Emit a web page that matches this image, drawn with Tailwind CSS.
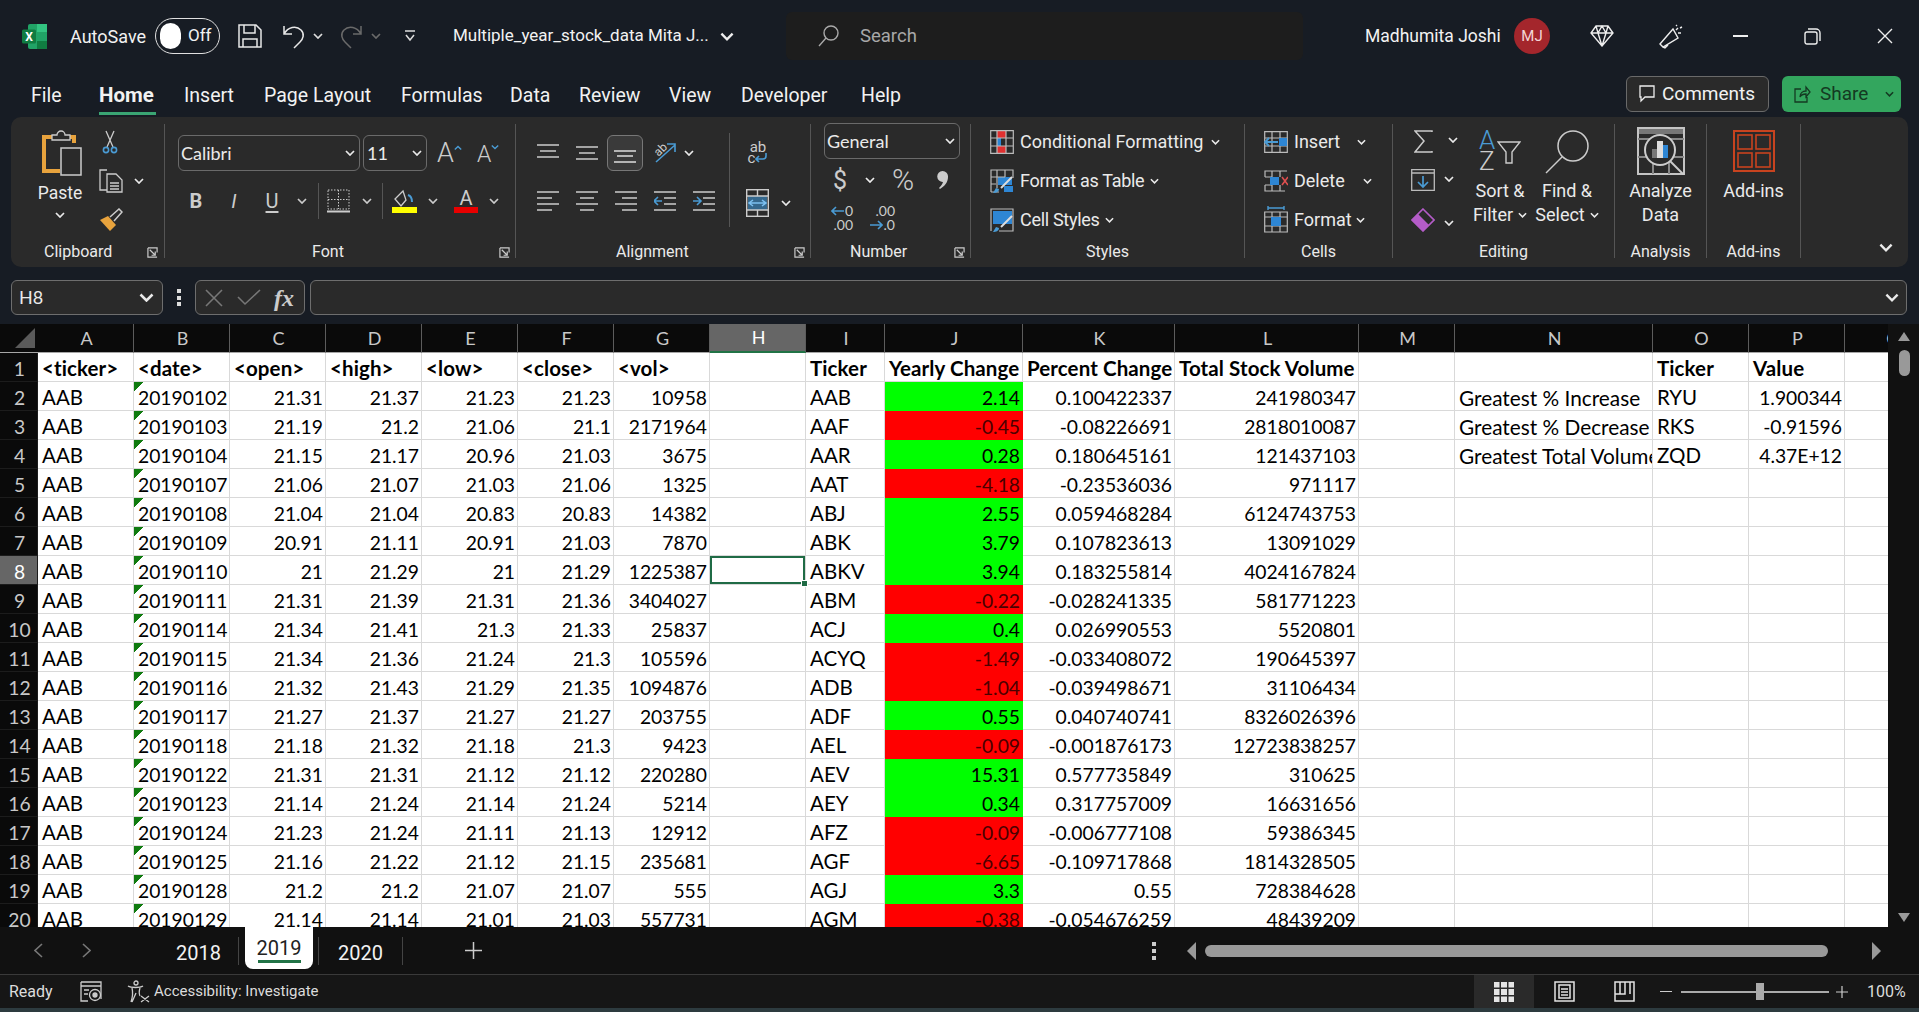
<!DOCTYPE html>
<html>
<head>
<meta charset="utf-8">
<script src="https://cdn.jsdelivr.net/npm/@tailwindcss/browser@4"></script>
</head>
<body class="w-[1919px] h-[1012px] overflow-hidden bg-[#171c24] text-[#f2f2f2] font-['Roboto',sans-serif] text-[18px] flex flex-col">
<svg class="hidden"><symbol id="c" viewBox="0 0 10 6"><path d="M1 1l4 4 4-4" fill="none" stroke="currentColor" stroke-width="1.7"/></symbol>
<symbol id="l" viewBox="0 0 12 12"><path d="M1 1v10h10M1 1h10v5M3 3l6 6M9 5v4H5" fill="none" stroke="currentColor" stroke-width="1.3"/></symbol></svg>

<!-- Title bar -->
<div class="h-[72px] flex items-center shrink-0">
  <svg class="ml-[22px] w-[25px] h-[25px]" viewBox="0 0 25 25"><rect x="6" y="0" width="19" height="25" rx="2" fill="#21a366"/><rect x="15" y="0" width="10" height="8" fill="#33c481"/><rect x="15" y="17" width="10" height="8" fill="#107c41"/><rect x="0" y="5.5" width="14" height="14" rx="1.5" fill="#107c41"/><text x="7" y="16.5" font-size="12" font-weight="700" fill="#fff" text-anchor="middle" font-family="Roboto">X</text></svg>
  <span class="ml-[23px] w-[78px] text-[18px]">AutoSave</span>
  <div class="ml-[7px] w-[65px] h-[36px] rounded-full border border-[#e0e0e0] flex items-center">
    <span class="ml-[4px] w-[21px] h-[26px] rounded-full bg-white"></span><span class="ml-[7px] text-[17px]">Off</span>
  </div>
  <svg class="ml-[18px] w-[24px] h-[24px] text-[#e8e8e8]" viewBox="0 0 24 24" fill="none" stroke="currentColor" stroke-width="1.5"><path d="M1 1h17l5 5v17H1z"/><path d="M6 1v8h11V1M5 23v-8h14v8"/></svg>
  <svg class="ml-[20px] w-[24px] h-[25px] text-[#e8e8e8]" viewBox="0 0 24 25" fill="none" stroke="currentColor" stroke-width="1.5"><path d="M2 2v8h8M2 10C6 3 14 1 19 6c4 4 2 9-1 12l-6 6"/></svg>
  <svg class="ml-[7px] w-[10px] h-[6px] text-[#ddd]"><use href="#c"/></svg>
  <svg class="ml-[16px] w-[24px] h-[25px] text-[#6a6a6a]" viewBox="0 0 24 25" fill="none" stroke="currentColor" stroke-width="1.5"><path d="M22 2v8h-8M22 10C18 3 10 1 5 6c-4 4-2 9 1 12l6 6"/></svg>
  <svg class="ml-[8px] w-[10px] h-[6px] text-[#6a6a6a]"><use href="#c"/></svg>
  <svg class="ml-[23px] w-[12px] h-[12px] text-[#ddd]" viewBox="0 0 12 12" fill="none" stroke="currentColor" stroke-width="1.5"><path d="M1 1h10M2 5l4 5 4-5"/></svg>
  <span class="ml-[37px] w-[258px] whitespace-nowrap text-[17px]">Multiple_year_stock_data Mita J...</span>
  <svg class="ml-[9px] w-[14px] h-[9px] text-[#eee]"><use href="#c"/></svg>
  <div class="ml-[52px] w-[517px] h-[48px] rounded-[6px] bg-[#1d1d1d] flex items-center">
    <svg class="ml-[32px] w-[21px] h-[22px] text-[#aaa]" viewBox="0 0 21 22" fill="none" stroke="currentColor" stroke-width="1.4"><circle cx="13" cy="8" r="7"/><path d="M8 13 1 21"/></svg>
    <span class="ml-[21px] pt-[2px] text-[#a8a8a8] text-[18.5px]">Search</span>
  </div>
  <span class="ml-[62px] w-[135px] whitespace-nowrap text-[17.5px]">Madhumita Joshi</span>
  <div class="ml-[14px] w-[36px] h-[36px] rounded-full bg-[#a4262c] flex items-center justify-center text-[15px] text-[#f3d6d6]">MJ</div>
  <svg class="ml-[40px] w-[24px] h-[22px] text-[#eee]" viewBox="0 0 24 22" fill="none" stroke="currentColor" stroke-width="1.4"><path d="M6 1h12l5 7-11 13L1 8zM1 8h22M8 8l4 13 4-13M6 1l2 7 4-7 4 7 2-7"/></svg>
  <svg class="ml-[45px] w-[24px] h-[25px] text-[#eee]" viewBox="0 0 24 25" fill="none" stroke="currentColor" stroke-width="1.4"><path d="M14 5 1 20l3 3 15-9zM4 23l2 1 3-3M17 6l2-2M19 9h3M17 2l1-1M21 4l2-1"/></svg>
  <div class="ml-[50px] w-[15px] h-[1.5px] bg-[#eee]"></div>
  <svg class="ml-[56px] w-[17px] h-[17px] text-[#eee]" viewBox="0 0 17 17" fill="none" stroke="currentColor" stroke-width="1.4"><rect x="1" y="4" width="12" height="12" rx="2"/><path d="M4 1h8a4 4 0 0 1 4 4v8"/></svg>
  <svg class="ml-[56px] w-[16px] h-[16px] text-[#eee]" viewBox="0 0 16 16" fill="none" stroke="currentColor" stroke-width="1.4"><path d="M1 1l14 14M15 1 1 15"/></svg>
</div>

<!-- Tabs -->
<div class="h-[45px] flex shrink-0 text-[19.5px] whitespace-nowrap">
  <div class="flex items-start pt-[9px]">
    <span class="ml-[31px] w-[68px]">File</span>
    <span class="w-[57px] h-[31px] text-[20.5px] font-bold border-b-[3px] border-[#3aa573] box-content leading-[29px]">Home</span>
    <span class="ml-[28px] w-[52px]">Insert</span>
    <span class="ml-[28px] w-[109px]">Page Layout</span>
    <span class="ml-[28px] w-[81px]">Formulas</span>
    <span class="ml-[28px] w-[41px]">Data</span>
    <span class="ml-[28px] w-[62px]">Review</span>
    <span class="ml-[28px] w-[42px]">View</span>
    <span class="ml-[30px] w-[90px]">Developer</span>
    <span class="ml-[30px] w-[40px]">Help</span>
  </div>
  <div class="ml-[725px] mt-[4px] w-[143px] h-[36px] rounded-[6px] border border-[#6a6a6a] bg-[#2a2a2a] flex items-center text-[19px]">
    <svg class="ml-[12px] w-[16px] h-[18px] text-[#eee]" viewBox="0 0 16 18" fill="none" stroke="currentColor" stroke-width="1.3"><path d="M1 1h14v11H6l-4 4v-4H1z"/></svg>
    <span class="ml-[7px]">Comments</span>
  </div>
  <div class="ml-[13px] mt-[4px] w-[119px] h-[36px] rounded-[6px] bg-[#33a65e] flex items-center text-[19px] text-[#143a22]">
    <svg class="ml-[12px] w-[17px] h-[18px] text-[#143a22]" viewBox="0 0 17 18" fill="none" stroke="currentColor" stroke-width="1.3"><path d="M7 4H1v13h12v-5M6 12c0-4 3-6 6-6V2l4 5-4 5V9c-3 0-5 1-6 3z"/></svg>
    <span class="ml-[9px]">Share</span>
    <svg class="ml-[17px] w-[9px] h-[6px]"><use href="#c"/></svg>
  </div>
</div>

<!-- Ribbon -->
<div class="ml-[11px] w-[1897px] h-[150px] rounded-[10px] bg-[#2a2a2a] flex shrink-0 text-[#eaeaea]">

  <!-- Clipboard -->
  <div class="w-[154px] h-[134px] mt-[7px] border-r border-[#555] flex flex-col">
    <div class="flex h-[118px] shrink-0">
      <div class="ml-[10px] w-[78px] flex flex-col items-center">
        <svg class="mt-[6px] ml-[4px] w-[42px] h-[46px]" viewBox="0 0 42 46" fill="none"><path d="M3 43V7h30v6" stroke="#e8a33d" stroke-width="4"/><path d="M3 41h16" stroke="#e8a33d" stroke-width="4"/><path d="M11 9V5h5a4 4 0 0 1 8 0h5v5H11z" stroke="#ccc" stroke-width="1.3" fill="#2a2a2a"/><rect x="20" y="18" width="20" height="27" stroke="#ccc" stroke-width="1.5" fill="#2a2a2a"/></svg>
        <span class="mt-[5px] leading-[24px] text-[17.5px]">Paste</span>
        <svg class="mt-[7px] w-[10px] h-[6px]"><use href="#c"/></svg>
      </div>
      <div class="pt-[6px] flex flex-col gap-[15px]">
        <svg class="ml-[3px] w-[16px] h-[24px]" viewBox="0 0 16 24" fill="none"><path d="M4 1l7 16M12 1 5 17" stroke="#ccc" stroke-width="1.3"/><circle cx="4" cy="20" r="2.6" stroke="#4a9bd4" stroke-width="1.6"/><circle cx="12" cy="20" r="2.6" stroke="#4a9bd4" stroke-width="1.6"/></svg>
        <div class="flex items-center">
          <svg class="w-[24px] h-[24px]" viewBox="0 0 24 24" fill="none" stroke="#ccc" stroke-width="1.3"><path d="M8 1H1v20h7"/><path d="M8 5h9l6 6v12H8zM11 14h9M11 17h9M11 20h9"/></svg>
          <svg class="ml-[11px] w-[10px] h-[6px]"><use href="#c"/></svg>
        </div>
        <svg class="w-[24px] h-[24px]" viewBox="0 0 24 24"><path d="M1 12l8-4 8 9-6 6z" fill="#e8a33d"/><path d="M11 9l9-8 3 3-8 9" fill="none" stroke="#ccc" stroke-width="1.5"/></svg>
      </div>
    </div>
    <div class="h-[20px] flex items-center text-[16px] whitespace-nowrap"><span class="ml-[33px]">Clipboard</span><svg class="ml-auto mr-[6px] w-[11px] h-[11px] text-[#ccc]"><use href="#l"/></svg></div>
  </div>

  <!-- Font -->
  <div class="w-[351px] h-[134px] mt-[7px] border-r border-[#555] flex flex-col">
    <div class="h-[118px] shrink-0">
      <div class="mt-[11px] ml-[13px] h-[36px] flex items-center">
        <div class="w-[182px] h-[36px] rounded-[6px] border border-[#6a6a6a] flex items-center pl-[2px]"><span class="font-[Lato]">Calibri</span><svg class="ml-auto mr-[4px] w-[10px] h-[6px]"><use href="#c"/></svg></div>
        <div class="ml-[3px] w-[64px] h-[36px] rounded-[6px] border border-[#6a6a6a] flex items-center pl-[3px]"><span class="font-[Lato]">11</span><svg class="ml-auto mr-[4px] w-[10px] h-[6px]"><use href="#c"/></svg></div>
        <span class="ml-[10px] text-[27px] leading-none font-light text-[#ccc]">A</span><svg class="mb-[10px] w-[8px] h-[6px] text-[#4a9bd4] rotate-180"><use href="#c"/></svg>
        <span class="ml-[15px] text-[23px] leading-none font-light text-[#ccc] pt-[3px]">A</span><svg class="mb-[12px] w-[8px] h-[6px] text-[#4a9bd4]"><use href="#c"/></svg>
      </div>
      <div class="mt-[12px] ml-[13px] h-[36px] flex items-center text-[#ccc]">
        <span class="w-[36px] text-center font-bold text-[20px] leading-none">B</span>
        <span class="w-[40px] text-center italic text-[20px] leading-none">I</span>
        <span class="w-[36px] text-center text-[20px] leading-none underline underline-offset-[3px]">U</span>
        <div class="w-[24px] flex justify-center"><svg class="w-[10px] h-[6px]"><use href="#c"/></svg></div>
        <div class="ml-[4px] w-px h-[36px] bg-[#555]"></div>
        <svg class="ml-[8px] w-[23px] h-[24px]" viewBox="0 0 23 24" fill="none" stroke="#ccc"><path d="M1 1h21v19H1z" stroke-dasharray="1.5 1.5"/><path d="M11.5 1v19M1 10.5h21" stroke-dasharray="1.5 1.5"/><path d="M0 22.5h23" stroke-width="2"/></svg>
        <div class="ml-[8px] w-[18px] flex justify-center"><svg class="w-[10px] h-[6px]"><use href="#c"/></svg></div>
        <div class="ml-[6px] w-px h-[36px] bg-[#555]"></div>
        <svg class="ml-[9px] w-[25px] h-[24px]" viewBox="0 0 25 24" fill="none"><path d="M3 10l8-8 3 9-5 6z" stroke="#ccc" stroke-width="1.3"/><path d="M16 6c3 1 4 4 4 7" stroke="#4a9bd4" stroke-width="2"/><rect x="0" y="18" width="25" height="6" fill="#ffff00"/></svg>
        <div class="ml-[7px] w-[18px] flex justify-center"><svg class="w-[10px] h-[6px]"><use href="#c"/></svg></div>
        <div class="ml-[12px] w-[24px] h-[24px] flex flex-col items-center"><span class="text-[20px] leading-[18px]">A</span><span class="w-[24px] h-[6px] bg-[#e80000]"></span></div>
        <div class="ml-[7px] w-[18px] flex justify-center"><svg class="w-[10px] h-[6px]"><use href="#c"/></svg></div>
      </div>
    </div>
    <div class="h-[20px] flex items-center text-[16px]"><span class="ml-[147px]">Font</span><svg class="ml-auto mr-[5px] w-[11px] h-[11px] text-[#ccc]"><use href="#l"/></svg></div>
  </div>

  <!-- Alignment -->
  <div class="w-[295px] h-[134px] mt-[7px] border-r border-[#555] flex flex-col">
    <div class="h-[118px] shrink-0 flex">
      <div class="w-[214px] h-[94px] mt-[9px] border-r border-[#555]">
        <div class="mt-[2px] ml-[12px] h-[36px] flex items-center">
          <div class="w-[39px] flex justify-center"><svg class="w-[22px] h-[22px]" viewBox="0 0 22 22" stroke="#ccc" stroke-width="1.6"><path d="M0 3h22M3 9h16M0 15h22"/></svg></div>
          <div class="w-[39px] flex justify-center"><svg class="w-[22px] h-[22px]" viewBox="0 0 22 22" stroke="#ccc" stroke-width="1.6"><path d="M0 5h22M3 11h16M0 17h22"/></svg></div>
          <div class="w-[39px] flex justify-end"><div class="w-[36px] h-[36px] rounded-[6px] border border-[#777] bg-[#3a3a3a] flex justify-center items-center mr-[2px]"><svg class="w-[22px] h-[22px]" viewBox="0 0 22 22" stroke="#ddd" stroke-width="1.6"><path d="M0 9h22M3 14h16M0 20h22"/></svg></div></div>
          <div class="w-[39px] flex justify-center"><svg class="w-[26px] h-[26px]" viewBox="0 0 26 26" fill="none"><path d="M4 22 23 5M15 4h8v8" stroke="#4a9bd4" stroke-width="1.6"/><text x="2" y="14" font-size="12" fill="#ccc" font-family="Roboto" transform="rotate(-45 8 10)">ab</text></svg></div>
          <svg class="w-[10px] h-[6px]"><use href="#c"/></svg>
        </div>
        <div class="mt-[12px] ml-[12px] h-[36px] flex items-center">
          <div class="w-[39px] flex justify-center"><svg class="w-[22px] h-[22px]" viewBox="0 0 22 22" stroke="#ccc" stroke-width="1.6"><path d="M0 2h22M0 8h15M0 14h22M0 20h15"/></svg></div>
          <div class="w-[39px] flex justify-center"><svg class="w-[22px] h-[22px]" viewBox="0 0 22 22" stroke="#ccc" stroke-width="1.6"><path d="M0 2h22M4 8h14M0 14h22M4 20h14"/></svg></div>
          <div class="w-[39px] flex justify-center"><svg class="w-[22px] h-[22px]" viewBox="0 0 22 22" stroke="#ccc" stroke-width="1.6"><path d="M0 2h22M7 8h15M0 14h22M7 20h15"/></svg></div>
          <div class="w-[39px] flex justify-center"><svg class="w-[22px] h-[22px]" viewBox="0 0 22 22" fill="none" stroke-width="1.6"><path d="M0 2h22M10 8h12M10 14h12M0 20h22" stroke="#ccc"/><path d="M8 11H0M4 7l-4 4 4 4" stroke="#4a9bd4"/></svg></div>
          <div class="w-[39px] flex justify-center"><svg class="w-[22px] h-[22px]" viewBox="0 0 22 22" fill="none" stroke-width="1.6"><path d="M0 2h22M10 8h12M10 14h12M0 20h22" stroke="#ccc"/><path d="M0 11h8M4 7l4 4-4 4" stroke="#4a9bd4"/></svg></div>
        </div>
      </div>
      <div class="ml-[16px] flex flex-col">
        <div class="mt-[18px] w-[24px] h-[24px] flex flex-col items-center text-[15px] leading-[11px] text-[#ccc]"><span>ab</span><span class="flex items-center">c<svg class="w-[13px] h-[11px]" viewBox="0 0 13 11" fill="none" stroke="#4a9bd4" stroke-width="1.6"><path d="M11 0v3a3 3 0 0 1-3 3H1M4 3 1 6l3 3"/></svg></span></div>
        <div class="mt-[23px] flex items-center">
          <svg class="w-[23px] h-[28px]" viewBox="0 0 23 28" fill="none"><rect x="2" y="7" width="19" height="14" fill="#35688d"/><rect x=".7" y=".7" width="21.6" height="26.6" stroke="#ccc" stroke-width="1.4"/><path d="M.7 7h21.6M.7 21h21.6M11.5 1v6M11.5 21v6" stroke="#ccc" stroke-width="1.4"/><path d="M3 14h17M7 11l-4 3 4 3M16 11l4 3-4 3" stroke="#7cc0f0" stroke-width="1.5"/></svg>
          <svg class="ml-[12px] w-[10px] h-[6px]"><use href="#c"/></svg>
        </div>
      </div>
    </div>
    <div class="h-[20px] flex items-center text-[16px]"><span class="ml-[100px]">Alignment</span><svg class="ml-auto mr-[5px] w-[11px] h-[11px] text-[#ccc]"><use href="#l"/></svg></div>
  </div>

  <!-- Number -->
  <div class="w-[160px] h-[134px] mt-[7px] border-r border-[#555] flex flex-col">
    <div class="h-[118px] shrink-0">
      <div class="-mt-[1px] ml-[13px] w-[136px] h-[36px] rounded-[6px] border border-[#6a6a6a] flex items-center pl-[2px]"><span class="font-[Lato]">General</span><svg class="ml-auto mr-[4px] w-[10px] h-[6px]"><use href="#c"/></svg></div>
      <div class="mt-[6px] ml-[22px] h-[30px] flex items-center text-[#ccc]">
        <span class="w-[16px] text-[25px] leading-none">$</span>
        <svg class="ml-[16px] w-[10px] h-[6px] text-[#eee]"><use href="#c"/></svg>
        <span class="ml-[17px] text-[30px] leading-none font-light">%</span>
        <svg class="ml-[23px] w-[11px] h-[18px]" viewBox="0 0 11 18"><path d="M5.500 0A5.500 5.500 0 0 1 11 6c0 5-3 9-8 12l-1-1c2-2 3.500-4 4-6A5.500 5.500 0 0 1 5.500 0z" fill="#ccc"/></svg>
      </div>
      <div class="mt-[9px] ml-[16px] flex items-center text-[14px] leading-[14px] text-[#ccc] font-[Lato]">
        <div class="w-[26px] flex flex-col items-end"><span class="flex items-center"><svg class="w-[13px] h-[10px] mr-[1px]" viewBox="0 0 13 10" fill="none" stroke="#4a9bd4" stroke-width="1.6"><path d="M13 5H1M5 1 1 5l4 4"/></svg>0</span><span>.00</span></div>
        <div class="ml-[16px] w-[26px] flex flex-col items-end"><span>.00</span><span class="flex items-center"><svg class="w-[13px] h-[10px] mr-[1px]" viewBox="0 0 13 10" fill="none" stroke="#4a9bd4" stroke-width="1.6"><path d="M0 5h12M8 1l4 4-4 4"/></svg>.0</span></div>
      </div>
    </div>
    <div class="h-[20px] flex items-center text-[16px]"><span class="ml-[39px]">Number</span><svg class="ml-auto mr-[5px] w-[11px] h-[11px] text-[#ccc]"><use href="#l"/></svg></div>
  </div>

  <!-- Styles -->
  <div class="w-[274px] h-[134px] mt-[7px] border-r border-[#555] flex flex-col">
    <div class="h-[118px] shrink-0 pl-[19px] whitespace-nowrap">
      <div class="-mt-[2px] h-[39px] flex items-center">
        <svg class="w-[24px] h-[24px]" viewBox="0 0 24 24" fill="none"><rect x="7" y="1" width="9" height="7" fill="#e03030"/><rect x="7" y="8" width="4" height="8" fill="#2e86d4"/><rect x="7" y="16" width="9" height="7" fill="#e03030"/><path d="M.7.7h22.6v22.6H.7zM7 1v22M16 1v22M1 8h22M1 16h22" stroke="#bbb" stroke-width="1.2"/></svg>
        <span class="ml-[6px]">Conditional Formatting</span><svg class="ml-[8px] w-[9px] h-[6px]"><use href="#c"/></svg>
      </div>
      <div class="h-[39px] flex items-center">
        <svg class="w-[24px] h-[24px]" viewBox="0 0 24 24" fill="none"><rect x="8" y="8" width="14" height="8" fill="#2e86d4"/><rect x="14" y="17" width="9" height="6" fill="#2e86d4"/><path d="M1 23V1h22v8M7 1v18M15 1v7M1 8h14M1 15h5M1 23h8" stroke="#bbb" stroke-width="1.2"/><path d="M22 8 11 19" stroke="#ddd" stroke-width="2"/><path d="M3 24c3 0 6-1 6-4l-3-1c-1 2-2 3-3 5z" fill="#4a9bd4"/></svg>
        <span class="ml-[6px] tracking-[-0.3px]">Format as Table</span><svg class="ml-[6px] w-[9px] h-[6px]"><use href="#c"/></svg>
      </div>
      <div class="h-[39px] flex items-center">
        <svg class="w-[24px] h-[24px]" viewBox="0 0 24 24" fill="none"><rect x="3" y="3" width="19" height="13" fill="#2e86d4"/><path d="M1 23V1h22v22H9" stroke="#bbb" stroke-width="1.2"/><path d="M22 8 11 19" stroke="#ddd" stroke-width="2"/><path d="M3 24c3 0 6-1 6-4l-3-1c-1 2-2 3-3 5z" fill="#4a9bd4"/></svg>
        <span class="ml-[6px] tracking-[-0.3px]">Cell Styles</span><svg class="ml-[6px] w-[9px] h-[6px]"><use href="#c"/></svg>
      </div>
    </div>
    <div class="h-[20px] flex items-center justify-center text-[16px]">Styles</div>
  </div>

  <!-- Cells -->
  <div class="w-[148px] h-[134px] mt-[7px] border-r border-[#555] flex flex-col">
    <div class="h-[118px] shrink-0 pl-[19px] whitespace-nowrap">
      <div class="-mt-[2px] h-[39px] flex items-center">
        <svg class="w-[24px] h-[22px]" viewBox="0 0 24 22" fill="none"><path d="M.7.7h22.6v20.6H.7zM8 1v20M16 1v20M1 7h22M1 15h22" stroke="#bbb" stroke-width="1.2"/><rect x="15" y="7" width="8" height="8" fill="#2e86d4"/><path d="M14 11H1M5 7l-4 4 4 4" stroke="#4a9bd4" stroke-width="1.8"/></svg>
        <span class="ml-[6px]">Insert</span><svg class="ml-[17px] w-[9px] h-[6px]"><use href="#c"/></svg>
      </div>
      <div class="h-[39px] flex items-center">
        <svg class="w-[24px] h-[22px]" viewBox="0 0 24 22" fill="none"><path d="M1 7V1h22M1 15v6h20M1 7h7M1 15h7M8 1v6M16 1v6M8 15v6M16 15v6" stroke="#bbb" stroke-width="1.2"/><rect x="6" y="7" width="9" height="8" fill="#2e86d4"/><path d="M18 7l6 8M24 7l-6 8" stroke="#e05050" stroke-width="1.6"/></svg>
        <span class="ml-[6px]">Delete</span><svg class="ml-[18px] w-[9px] h-[6px]"><use href="#c"/></svg>
      </div>
      <div class="h-[39px] flex items-center">
        <svg class="w-[24px] h-[27px]" viewBox="0 0 24 27" fill="none"><path d="M.7 6h22.6v20H.7zM8 6v20M16 6v20M1 11h22M1 20h22" stroke="#bbb" stroke-width="1.2"/><rect x="7" y="11" width="10" height="9" fill="#2e86d4"/><path d="M4 2h16M4 0v4M20 0v4" stroke="#4a9bd4" stroke-width="1.4"/></svg>
        <span class="ml-[6px]">Format</span><svg class="ml-[4px] w-[9px] h-[6px]"><use href="#c"/></svg>
      </div>
    </div>
    <div class="h-[20px] flex items-center justify-center text-[16px]">Cells</div>
  </div>

  <!-- Editing -->
  <div class="w-[222px] h-[134px] mt-[7px] border-r border-[#555] flex flex-col">
    <div class="h-[118px] shrink-0 flex whitespace-nowrap">
      <div class="ml-[18px] w-[62px] -mr-[7px] pt-[6px] flex flex-col">
        <div class="h-[39px] flex items-start">
          <svg class="ml-[3px] w-[19px] h-[23px]" viewBox="0 0 19 23" fill="none" stroke="#ccc" stroke-width="1.5"><path d="M18 2V1H1l9 10-9 11h17v-1"/></svg>
          <svg class="ml-[15px] mt-[7px] w-[10px] h-[6px]"><use href="#c"/></svg>
        </div>
        <div class="h-[39px] flex items-start">
          <svg class="w-[24px] h-[22px]" viewBox="0 0 24 22" fill="none"><path d="M.7.7h22.6v20.6H.7zM1 4h22" stroke="#bbb" stroke-width="1.3"/><path d="M12 7v10M7 13l5 5 5-5" stroke="#4a9bd4" stroke-width="1.7"/></svg>
          <svg class="ml-[9px] mt-[7px] w-[10px] h-[6px]"><use href="#c"/></svg>
        </div>
        <div class="h-[30px] flex items-start">
          <svg class="w-[24px] h-[24px]" viewBox="0 0 24 24" fill="none"><path d="M12 1l11 11-11 11L1 12z" stroke="#b45cc8" stroke-width="1.6"/><path d="M1 12l6-6 11 11-6 6z" fill="#b45cc8"/></svg>
          <svg class="ml-[9px] mt-[12px] w-[10px] h-[6px]"><use href="#c"/></svg>
        </div>
      </div>
      <div class="w-[68px] flex flex-col items-center">
        <div class="mt-[6px] w-[42px] h-[42px] flex">
          <div class="w-[18px] flex flex-col text-[26px] leading-[21px] font-light"><span class="text-[#4a9bd4]">A</span><span class="text-[#ccc]">Z</span></div>
          <svg class="mt-[11px] w-[24px] h-[23px]" viewBox="0 0 24 23" fill="none" stroke="#ccc" stroke-width="1.4"><path d="M1 1h22L15 11v11H9V11z"/></svg>
        </div>
        <span class="mt-[7px] leading-[24px]">Sort &amp;</span>
        <span class="leading-[24px] flex items-center">Filter<svg class="ml-[5px] w-[9px] h-[6px]"><use href="#c"/></svg></span>
      </div>
      <div class="w-[66px] flex flex-col items-center">
        <svg class="mt-[6px] w-[44px] h-[44px]" viewBox="0 0 44 44" fill="none" stroke="#ccc" stroke-width="1.5"><circle cx="28" cy="16" r="15"/><path d="M17 27 1 43"/></svg>
        <span class="mt-[5px] leading-[24px]">Find &amp;</span>
        <span class="leading-[24px] flex items-center">Select<svg class="ml-[5px] w-[9px] h-[6px]"><use href="#c"/></svg></span>
      </div>
    </div>
    <div class="h-[20px] flex items-center justify-center text-[16px]">Editing</div>
  </div>

  <!-- Analysis -->
  <div class="w-[92px] h-[134px] mt-[7px] border-r border-[#555] flex flex-col">
    <div class="h-[118px] shrink-0 flex flex-col items-center">
      <svg class="mt-[3px] w-[48px] h-[48px]" viewBox="0 0 48 48" fill="none"><path d="M1 1h46v46H1z" stroke="#c4c4c4" stroke-width="2"/><rect x="2" y="2" width="44" height="5" fill="#777"/><path d="M1 12h46M1 30h46M16 30v17M32 30v17" stroke="#888" stroke-width="2"/><circle cx="23" cy="23" r="15" fill="#2a2a2a" stroke="#ccc" stroke-width="2"/><rect x="15" y="22" width="5" height="9" fill="#777"/><rect x="20" y="14" width="6" height="17" fill="#ddd"/><rect x="26" y="18" width="5" height="13" fill="#2e86d4"/><path d="M33 34l14 14" stroke="#ccc" stroke-width="2"/></svg>
      <span class="mt-[4px] leading-[24px]">Analyze</span>
      <span class="leading-[24px]">Data</span>
    </div>
    <div class="h-[20px] flex items-center justify-center text-[16px]">Analysis</div>
  </div>

  <!-- Add-ins -->
  <div class="w-[94px] h-[134px] mt-[7px] border-r border-[#555] flex flex-col">
    <div class="h-[118px] shrink-0 flex flex-col items-center">
      <svg class="mt-[6px] w-[42px] h-[42px]" viewBox="0 0 42 42" fill="none" stroke="#c8431f" stroke-width="1.6"><rect x="1" y="1" width="40" height="40" stroke-width="2"/><rect x="5" y="5" width="14" height="14"/><rect x="23" y="5" width="14" height="14"/><rect x="5" y="23" width="14" height="14"/><rect x="23" y="23" width="14" height="14"/></svg>
      <span class="mt-[7px] leading-[24px]">Add-ins</span>
    </div>
    <div class="h-[20px] flex items-center justify-center text-[16px]">Add-ins</div>
  </div>

  <div class="ml-[78px] mt-[126px]"><svg class="w-[14px] h-[9px]"><use href="#c"/></svg></div>
</div>

<!-- Formula bar -->
<div class="h-[57px] pt-[13px] flex shrink-0 text-[#eaeaea]">
  <div class="ml-[11px] w-[152px] h-[35px] rounded-[6px] border border-[#6e6e6e] bg-[#2a2a2a] flex items-center pl-[7px]"><span class="font-[Lato] text-[18px]">H8</span><svg class="ml-auto mr-[8px] w-[15px] h-[9px]"><use href="#c"/></svg></div>
  <div class="ml-[14px] mt-[9px] w-[5px] h-[17px] flex flex-col justify-between"><span class="w-[4px] h-[4px] bg-[#ddd]"></span><span class="w-[4px] h-[4px] bg-[#ddd]"></span><span class="w-[4px] h-[4px] bg-[#ddd]"></span></div>
  <div class="ml-[13px] w-[110px] h-[35px] rounded-[6px] border border-[#6e6e6e] bg-[#2a2a2a] flex items-center">
    <svg class="ml-[9px] w-[18px] h-[18px] text-[#777]" viewBox="0 0 18 18" fill="none" stroke="currentColor" stroke-width="1.6"><path d="M1 1l16 16M17 1 1 17"/></svg>
    <svg class="ml-[14px] w-[24px] h-[17px] text-[#777]" viewBox="0 0 24 17" fill="none" stroke="currentColor" stroke-width="1.6"><path d="M1 8l7 7L23 1"/></svg>
    <span class="ml-[13px] font-['Liberation_Serif',serif] italic font-bold text-[24px] leading-none text-[#ccc]">fx</span>
  </div>
  <div class="ml-[5px] w-[1597px] h-[35px] rounded-[6px] border border-[#6e6e6e] bg-[#2a2a2a] flex items-center"><svg class="ml-auto mr-[7px] w-[14px] h-[9px]"><use href="#c"/></svg></div>
</div>

<!-- Grid -->
<div class="h-[603px] flex shrink-0 bg-[#0a0a0a]">
  <div class="w-[1888px] overflow-hidden">
    <table class="table-fixed border-separate border-spacing-0 w-[1941px] font-[Lato] text-[19.3px] text-black bg-white [&_th]:h-[28px] [&_th]:font-normal [&_th]:bg-[#0a0a0a] [&_th]:text-[#c8c8c8] [&_th]:text-[18px] [&_th]:pl-[2px] [&_th]:border-r [&_th]:border-b [&_th]:border-r-[#5c5c5c] [&_th]:border-b-[#a6a6a6] [&_tbody_td]:h-[29px] [&_tbody_td]:border-r [&_tbody_td]:border-b [&_tbody_td]:border-[#d9d9d9] [&_tbody_td]:pl-[4px] [&_tbody_td]:pr-[2px] [&_tbody_td]:pt-[2px] [&_tbody_td]:pb-0 [&_tbody_td]:leading-[25px] [&_tbody_td]:text-right [&_tbody_td]:whitespace-nowrap [&_tbody_td]:overflow-hidden [&_tbody_td:nth-child(1)]:bg-[#0a0a0a] [&_tbody_td:nth-child(1)]:text-[#c8c8c8] [&_tbody_td:nth-child(1)]:text-center [&_tbody_td:nth-child(1)]:font-normal [&_tbody_td:nth-child(1)]:border-[#1c1c1c] [&_tbody_td:nth-child(2)]:text-left [&_tbody_td:nth-child(2)]:text-[20.5px] [&_tbody_td:nth-child(3)]:text-left [&_tbody_td:nth-child(10)]:text-left [&_tbody_td:nth-child(10)]:text-[20.5px] [&_tbody_td:nth-child(15)]:text-left [&_tbody_td:nth-child(15)]:text-[20.8px] [&_tbody_td:nth-child(16)]:text-left [&_tbody_td:nth-child(16)]:text-[20.5px] [&_tbody_tr+tr_td:nth-child(3)]:bg-[linear-gradient(135deg,#0f7b0f_6.5px,transparent_6.5px)]">
      <colgroup><col class="w-[38px]"><col class="w-[96px]"><col class="w-[96px]"><col class="w-[96px]"><col class="w-[96px]"><col class="w-[96px]"><col class="w-[96px]"><col class="w-[96px]"><col class="w-[96px]"><col class="w-[79px]"><col class="w-[138px]"><col class="w-[152px]"><col class="w-[184px]"><col class="w-[96px]"><col class="w-[198px]"><col class="w-[96px]"><col class="w-[96px]"><col class="w-[96px]"></colgroup>
      <thead><tr>
        <th class="border-r-0! pl-0!"><svg class="ml-[15px] w-[20px] h-[20px]" viewBox="0 0 20 20"><path d="M20 0v20H0z" fill="#5a5a5a"/></svg></th>
        <th>A</th><th>B</th><th>C</th><th>D</th><th>E</th><th>F</th><th>G</th><th class="bg-[#666]! text-white! border-b-2! border-b-[#217346]!">H</th><th>I</th><th>J</th><th>K</th><th>L</th><th>M</th><th>N</th><th>O</th><th>P</th><th>Q</th>
      </tr></thead>
      <tbody>
        <tr class="font-bold tracking-[0.1px] [&_td:nth-child(n)]:text-left [&_td:nth-child(n+2)]:text-[20.5px]"><td>1</td><td>&lt;ticker&gt;</td><td>&lt;date&gt;</td><td>&lt;open&gt;</td><td>&lt;high&gt;</td><td>&lt;low&gt;</td><td>&lt;close&gt;</td><td>&lt;vol&gt;</td><td></td><td>Ticker</td><td>Yearly Change</td><td>Percent Change</td><td>Total Stock Volume</td><td></td><td></td><td>Ticker</td><td>Value</td><td></td></tr>
        <tr><td>2</td><td>AAB</td><td>20190102</td><td>21.31</td><td>21.37</td><td>21.23</td><td>21.23</td><td>10958</td><td></td><td>AAB</td><td class="bg-[#00ff00] border-transparent!">2.14</td><td>0.100422337</td><td>241980347</td><td></td><td>Greatest % Increase</td><td>RYU</td><td>1.900344</td><td></td></tr>
        <tr><td>3</td><td>AAB</td><td>20190103</td><td>21.19</td><td>21.2</td><td>21.06</td><td>21.1</td><td>2171964</td><td></td><td>AAF</td><td class="bg-[#ff0000] text-[#4a0000] border-transparent!">-0.45</td><td>-0.08226691</td><td>2818010087</td><td></td><td>Greatest % Decrease</td><td>RKS</td><td>-0.91596</td><td></td></tr>
        <tr><td>4</td><td>AAB</td><td>20190104</td><td>21.15</td><td>21.17</td><td>20.96</td><td>21.03</td><td>3675</td><td></td><td>AAR</td><td class="bg-[#00ff00] border-transparent!">0.28</td><td>0.180645161</td><td>121437103</td><td></td><td>Greatest Total Volume</td><td>ZQD</td><td>4.37E+12</td><td></td></tr>
        <tr><td>5</td><td>AAB</td><td>20190107</td><td>21.06</td><td>21.07</td><td>21.03</td><td>21.06</td><td>1325</td><td></td><td>AAT</td><td class="bg-[#ff0000] text-[#4a0000] border-transparent!">-4.18</td><td>-0.23536036</td><td>971117</td><td></td><td></td><td></td><td></td><td></td></tr>
        <tr><td>6</td><td>AAB</td><td>20190108</td><td>21.04</td><td>21.04</td><td>20.83</td><td>20.83</td><td>14382</td><td></td><td>ABJ</td><td class="bg-[#00ff00] border-transparent!">2.55</td><td>0.059468284</td><td>6124743753</td><td></td><td></td><td></td><td></td><td></td></tr>
        <tr><td>7</td><td>AAB</td><td>20190109</td><td>20.91</td><td>21.11</td><td>20.91</td><td>21.03</td><td>7870</td><td></td><td>ABK</td><td class="bg-[#00ff00] border-transparent!">3.79</td><td>0.107823613</td><td>13091029</td><td></td><td></td><td></td><td></td><td></td></tr>
        <tr><td class="bg-[#666]! text-white!">8</td><td>AAB</td><td>20190110</td><td>21</td><td>21.29</td><td>21</td><td>21.29</td><td>1225387</td><td class="relative overflow-visible! shadow-[inset_0_0_0_2px_#1f6b45]"><span class="absolute -right-[3px] -bottom-[3px] w-[7px] h-[7px] bg-[#1f6b45] border border-white"></span></td><td>ABKV</td><td class="bg-[#00ff00] border-transparent!">3.94</td><td>0.183255814</td><td>4024167824</td><td></td><td></td><td></td><td></td><td></td></tr>
        <tr><td>9</td><td>AAB</td><td>20190111</td><td>21.31</td><td>21.39</td><td>21.31</td><td>21.36</td><td>3404027</td><td></td><td>ABM</td><td class="bg-[#ff0000] text-[#4a0000] border-transparent!">-0.22</td><td>-0.028241335</td><td>581771223</td><td></td><td></td><td></td><td></td><td></td></tr>
        <tr><td>10</td><td>AAB</td><td>20190114</td><td>21.34</td><td>21.41</td><td>21.3</td><td>21.33</td><td>25837</td><td></td><td>ACJ</td><td class="bg-[#00ff00] border-transparent!">0.4</td><td>0.026990553</td><td>5520801</td><td></td><td></td><td></td><td></td><td></td></tr>
        <tr><td>11</td><td>AAB</td><td>20190115</td><td>21.34</td><td>21.36</td><td>21.24</td><td>21.3</td><td>105596</td><td></td><td>ACYQ</td><td class="bg-[#ff0000] text-[#4a0000] border-transparent!">-1.49</td><td>-0.033408072</td><td>190645397</td><td></td><td></td><td></td><td></td><td></td></tr>
        <tr><td>12</td><td>AAB</td><td>20190116</td><td>21.32</td><td>21.43</td><td>21.29</td><td>21.35</td><td>1094876</td><td></td><td>ADB</td><td class="bg-[#ff0000] text-[#4a0000] border-transparent!">-1.04</td><td>-0.039498671</td><td>31106434</td><td></td><td></td><td></td><td></td><td></td></tr>
        <tr><td>13</td><td>AAB</td><td>20190117</td><td>21.27</td><td>21.37</td><td>21.27</td><td>21.27</td><td>203755</td><td></td><td>ADF</td><td class="bg-[#00ff00] border-transparent!">0.55</td><td>0.040740741</td><td>8326026396</td><td></td><td></td><td></td><td></td><td></td></tr>
        <tr><td>14</td><td>AAB</td><td>20190118</td><td>21.18</td><td>21.32</td><td>21.18</td><td>21.3</td><td>9423</td><td></td><td>AEL</td><td class="bg-[#ff0000] text-[#4a0000] border-transparent!">-0.09</td><td>-0.001876173</td><td>12723838257</td><td></td><td></td><td></td><td></td><td></td></tr>
        <tr><td>15</td><td>AAB</td><td>20190122</td><td>21.31</td><td>21.31</td><td>21.12</td><td>21.12</td><td>220280</td><td></td><td>AEV</td><td class="bg-[#00ff00] border-transparent!">15.31</td><td>0.577735849</td><td>310625</td><td></td><td></td><td></td><td></td><td></td></tr>
        <tr><td>16</td><td>AAB</td><td>20190123</td><td>21.14</td><td>21.24</td><td>21.14</td><td>21.24</td><td>5214</td><td></td><td>AEY</td><td class="bg-[#00ff00] border-transparent!">0.34</td><td>0.317757009</td><td>16631656</td><td></td><td></td><td></td><td></td><td></td></tr>
        <tr><td>17</td><td>AAB</td><td>20190124</td><td>21.23</td><td>21.24</td><td>21.11</td><td>21.13</td><td>12912</td><td></td><td>AFZ</td><td class="bg-[#ff0000] text-[#4a0000] border-transparent!">-0.09</td><td>-0.006777108</td><td>59386345</td><td></td><td></td><td></td><td></td><td></td></tr>
        <tr><td>18</td><td>AAB</td><td>20190125</td><td>21.16</td><td>21.22</td><td>21.12</td><td>21.15</td><td>235681</td><td></td><td>AGF</td><td class="bg-[#ff0000] text-[#4a0000] border-transparent!">-6.65</td><td>-0.109717868</td><td>1814328505</td><td></td><td></td><td></td><td></td><td></td></tr>
        <tr><td>19</td><td>AAB</td><td>20190128</td><td>21.2</td><td>21.2</td><td>21.07</td><td>21.07</td><td>555</td><td></td><td>AGJ</td><td class="bg-[#00ff00] border-transparent!">3.3</td><td>0.55</td><td>728384628</td><td></td><td></td><td></td><td></td><td></td></tr>
        <tr><td>20</td><td>AAB</td><td>20190129</td><td>21.14</td><td>21.14</td><td>21.01</td><td>21.03</td><td>557731</td><td></td><td>AGM</td><td class="bg-[#ff0000] text-[#4a0000] border-transparent!">-0.38</td><td>-0.054676259</td><td>48439209</td><td></td><td></td><td></td><td></td><td></td></tr>
      </tbody>
    </table>
  </div>
  <div class="w-[31px] flex flex-col items-center bg-[#111]">
    <div class="mt-[8px] ml-[1px] w-0 h-0 border-x-[6px] border-x-transparent border-b-[9px] border-b-[#999]"></div>
    <div class="mt-[9px] ml-[1px] w-[11px] h-[26px] rounded-full bg-[#999]"></div>
    <div class="mt-auto mb-[5px] ml-[1px] w-0 h-0 border-x-[6px] border-x-transparent border-t-[9px] border-t-[#999]"></div>
  </div>
</div>

<!-- Sheet tabs -->
<div class="h-[48px] flex items-center shrink-0 bg-[#111] border-b border-[#3a3a3a] text-[20px]">
  <svg class="ml-[34px] w-[9px] h-[15px] text-[#777]" viewBox="0 0 9 15" fill="none" stroke="currentColor" stroke-width="1.6"><path d="M8 1 1 7.500l7 6.500"/></svg>
  <svg class="ml-[39px] w-[9px] h-[15px] text-[#777]" viewBox="0 0 9 15" fill="none" stroke="currentColor" stroke-width="1.6"><path d="M1 1l7 6.500-7 6.500"/></svg>
  <span class="ml-[85px] w-[45px] mt-[4px]">2018</span>
  <div class="ml-[17px] w-px h-[28px] bg-[#444]"></div>
  <div class="ml-[6px] w-[68px] h-[42px] self-start rounded-b-[8px] bg-white text-[#222] flex flex-col items-center"><span class="mt-[10px] leading-[22px]">2019</span><span class="mt-[1px] w-[43px] h-[3px] bg-[#217346]"></span></div>
  <div class="ml-[5px] w-px h-[28px] bg-[#444]"></div>
  <span class="ml-[19px] w-[45px] mt-[4px]">2020</span>
  <div class="ml-[19px] w-px h-[28px] bg-[#444]"></div>
  <svg class="ml-[62px] w-[17px] h-[17px] text-[#ccc]" viewBox="0 0 17 17" stroke="currentColor" stroke-width="1.5"><path d="M8.500 0v17M0 8.500h17"/></svg>
  <div class="ml-[670px] w-[4px] h-[18px] flex flex-col justify-between"><span class="w-[4px] h-[4px] bg-[#ccc]"></span><span class="w-[4px] h-[4px] bg-[#ccc]"></span><span class="w-[4px] h-[4px] bg-[#ccc]"></span></div>
  <div class="ml-[31px] w-0 h-0 border-y-[9px] border-y-transparent border-r-[9px] border-r-[#999]"></div>
  <div class="ml-[9px] w-[623px] h-[12px] rounded-full bg-[#999]"></div>
  <div class="ml-[44px] w-0 h-0 border-y-[9px] border-y-transparent border-l-[9px] border-l-[#999]"></div>
</div>

<!-- Status bar -->
<div class="h-[33px] flex items-center shrink-0 bg-[#161616] text-[16px] text-[#dcdcdc] whitespace-nowrap">
  <span class="ml-[9px] w-[42px]">Ready</span>
  <svg class="ml-[29px] w-[22px] h-[21px]" viewBox="0 0 22 21" fill="none" stroke="#ccc" stroke-width="1.3"><path d="M1 1h20v17M1 5h20M1 1v19h7M4 9h5M4 13h4"/><circle cx="15" cy="14" r="5.500"/><circle cx="15" cy="14" r="2" fill="#ccc"/></svg>
  <svg class="ml-[25px] w-[23px] h-[23px]" viewBox="0 0 23 23" fill="none" stroke="#ccc" stroke-width="1.3"><circle cx="9" cy="3" r="2"/><path d="M1 6c3 2 12 2 15 0M5 8c1 4 1 8-1 14M13 8c-1 3-1 6 0 8M9 13l-4 9M14 16l8 6M22 16l-8 6"/></svg>
  <span class="ml-[4px] w-[166px] text-[15px]">Accessibility: Investigate</span>
  <div class="ml-[1154px] w-[60px] h-[33px] bg-[#2a2a2a] flex items-center justify-center">
    <svg class="w-[20px] h-[20px]" viewBox="0 0 20 20" fill="#e4e4e4"><path d="M0 0h5.500v5.500H0zM7 0h6v5.500H7zM14.500 0H20v5.500h-5.500zM0 7h5.500v6H0zM7 7h6v6H7zM14.500 7H20v6h-5.500zM0 14.500h5.500V20H0zM7 14.500h6V20H7zM14.500 14.500H20V20h-5.500z"/></svg>
  </div>
  <svg class="ml-[20px] w-[21px] h-[21px]" viewBox="0 0 21 21" fill="none" stroke="#e4e4e4" stroke-width="1.5"><path d="M1 1h19v19H1zM5 4h11v13H5zM7 8h7M7 11h7M7 14h7"/></svg>
  <svg class="ml-[39px] w-[21px] h-[21px]" viewBox="0 0 21 21" fill="none" stroke="#e4e4e4" stroke-width="1.500"><path d="M1 1h19v19H1zM1 13h10V1M6 1v12M16 1v12"/></svg>
  <div class="ml-[25px] w-[12px] h-[1.500px] bg-[#ccc]"></div>
  <div class="ml-[9px] w-[148px] h-[2px] bg-[#aaa] flex items-center"><span class="ml-[75px] w-[8px] h-[17px] bg-[#aaa]"></span></div>
  <svg class="ml-[7px] w-[12px] h-[12px]" viewBox="0 0 12 12" stroke="#ccc" stroke-width="1.200"><path d="M6 0v12M0 6h12"/></svg>
  <span class="ml-[19px]">100%</span>
</div>
<div class="h-[4px] bg-[#2d3b3f] shrink-0"></div>
</body>
</html>
